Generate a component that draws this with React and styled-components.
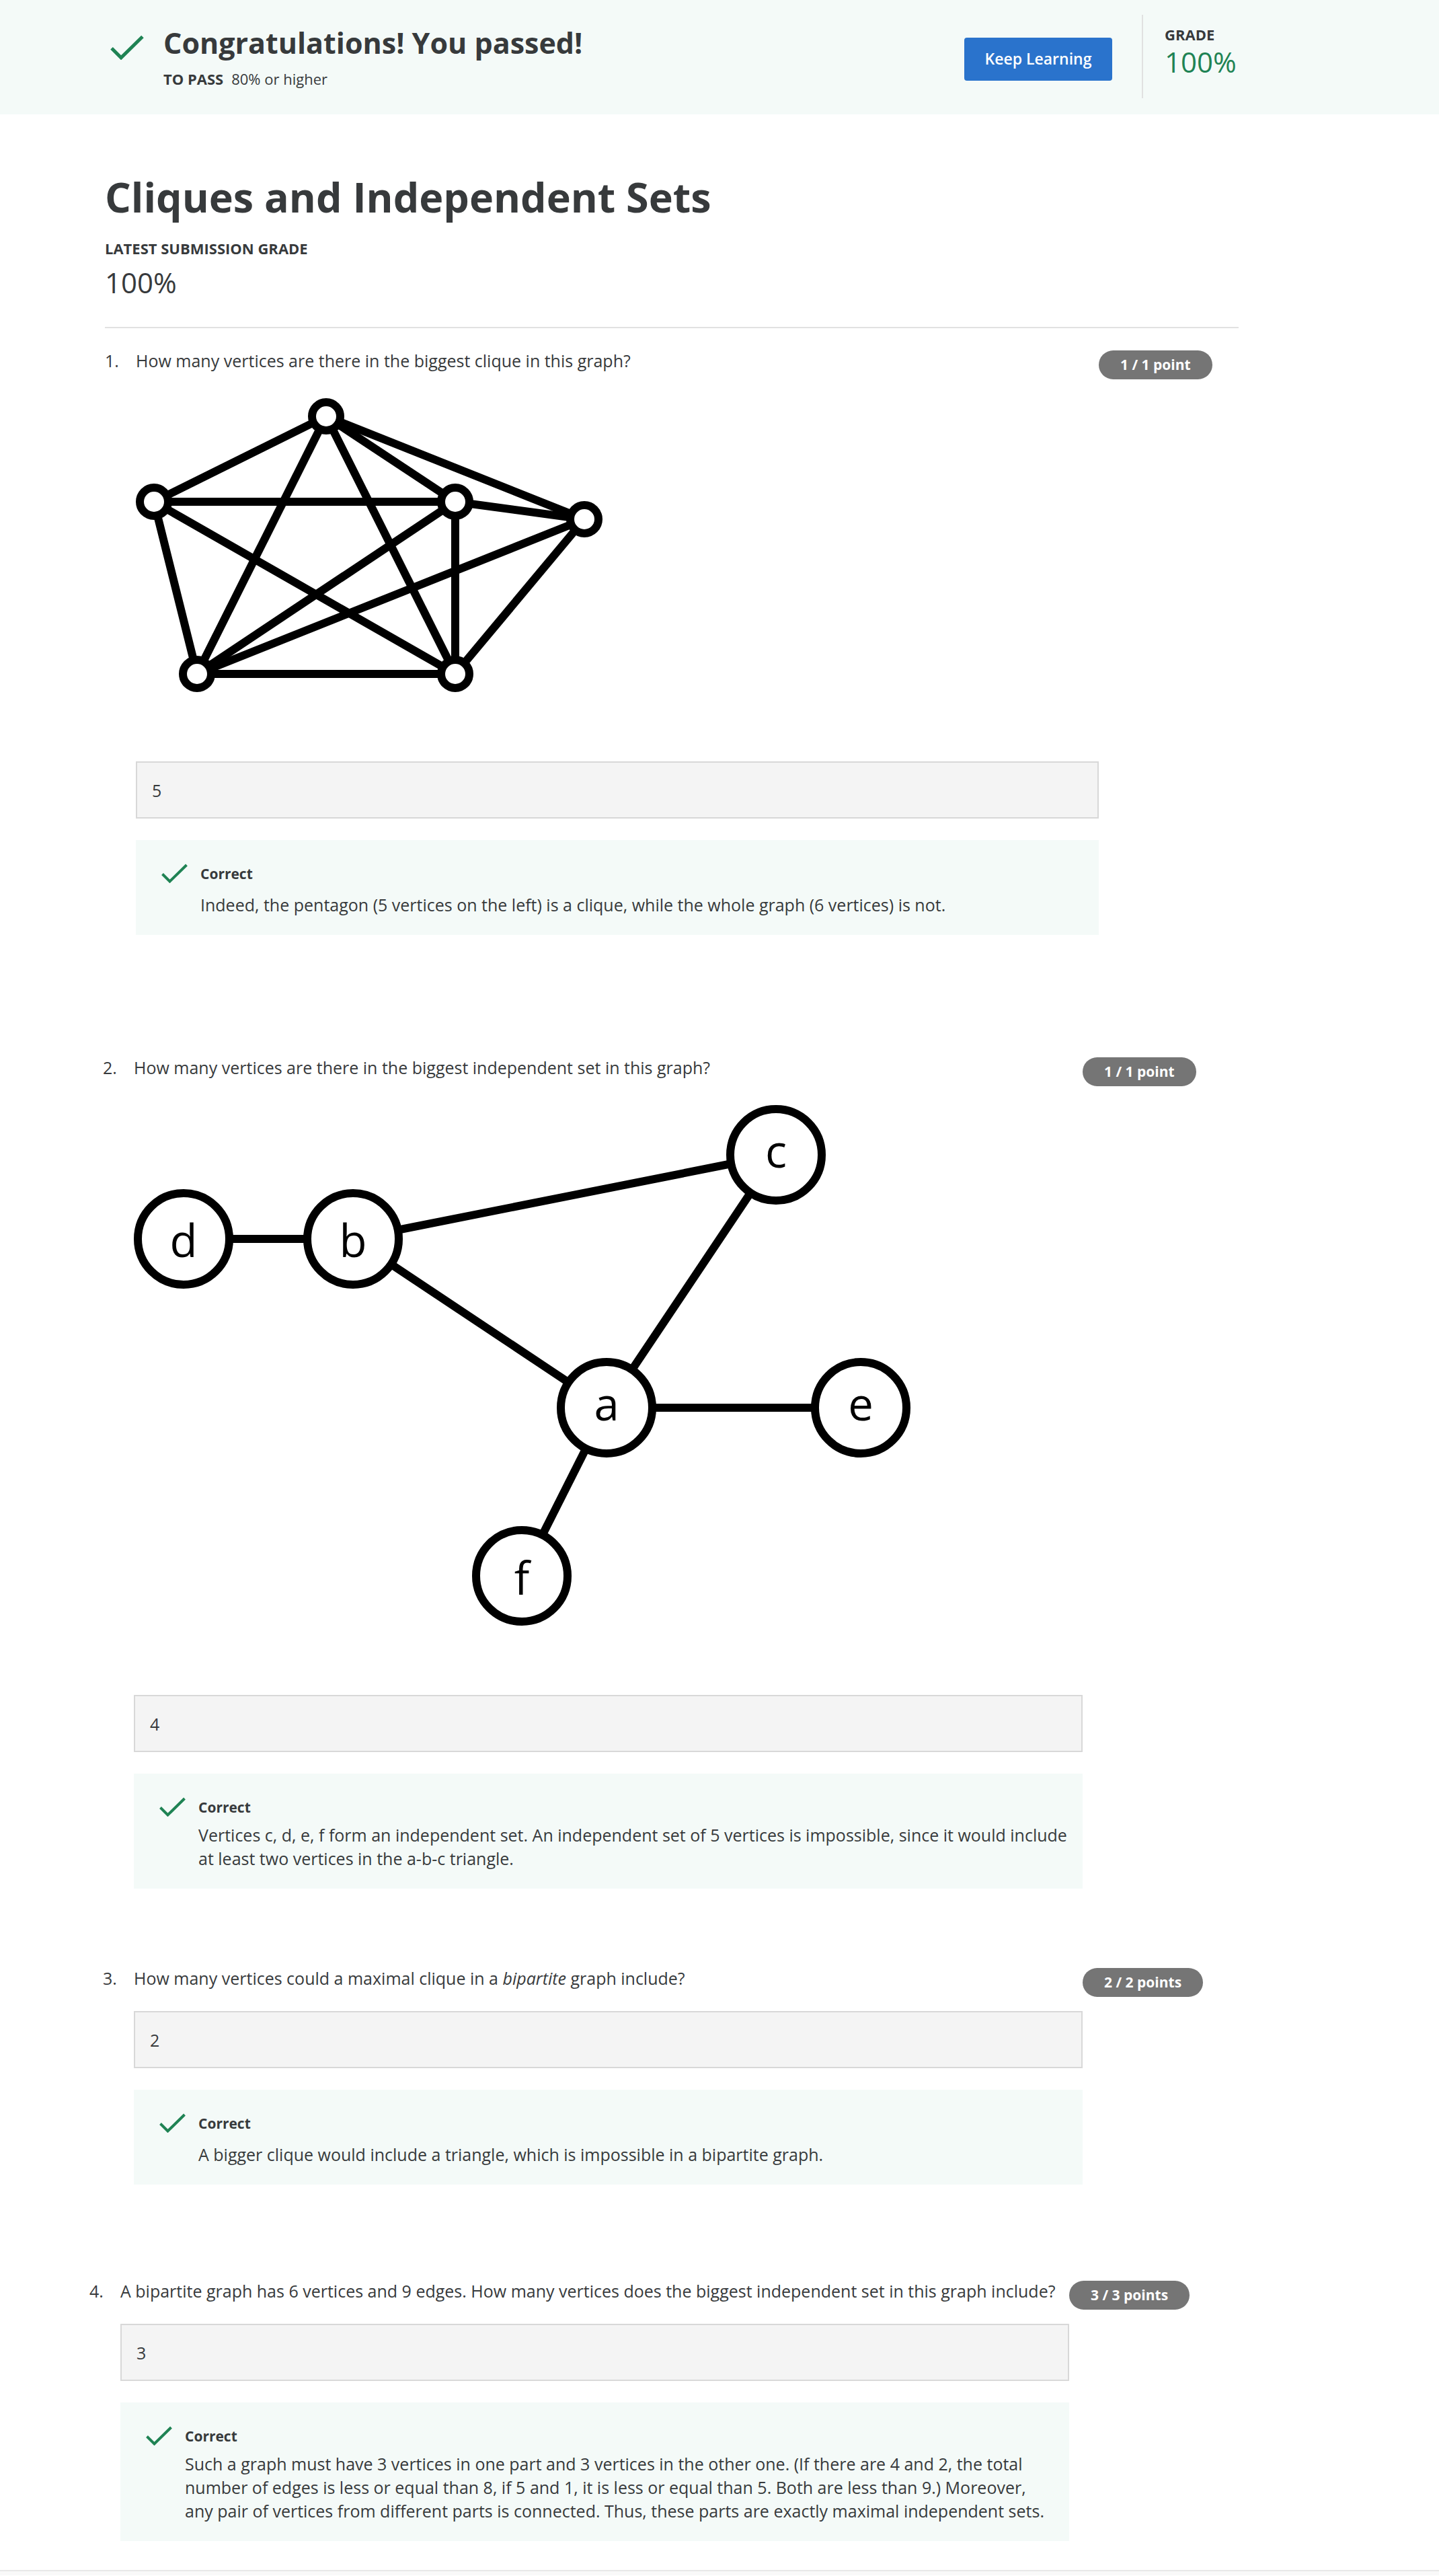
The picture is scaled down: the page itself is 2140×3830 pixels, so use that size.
import React from "react";
import styled, { createGlobalStyle } from "styled-components";

const GlobalStyle = createGlobalStyle`
  *, *::before, *::after { box-sizing: border-box; }
  body {
    margin: 0;
    background: #fff;
    color: #373a3c;
    font-family: "Open Sans", "Noto Sans", sans-serif;
    font-size: 25px;
    line-height: 35px;
  }
  h1, h2, h3, p, figure { margin: 0; }
`;

const Banner = styled.header`
  display: flex;
  align-items: stretch;
  padding: 22px 298px 24px 156px;
  background: #f4faf8;
`;

const BannerIcon = styled.div`
  padding: 30px 0 0 8px;
  width: 87px;
`;

const BannerText = styled.div`
  flex: 1;
  padding-top: 13px;
`;

const BannerTitle = styled.h2`
  margin-bottom: 10px;
  font-size: 43px;
  line-height: 58px;
  font-weight: 700;
`;

const Requirement = styled.p`
  display: flex;
  gap: 12px;
  font-size: 22px;
  line-height: 28px;
`;

const Strong = styled.span`
  font-weight: 700;
`;

const KeepLearning = styled.button`
  align-self: center;
  min-width: 220px;
  height: 64px;
  margin: 8px 44px 0 0;
  padding: 0 0 2px;
  border: 0;
  border-radius: 4px;
  background: #2a73cc;
  color: #fff;
  font: 600 23px/32px "Open Sans", "Noto Sans", sans-serif;
`;

const Grade = styled.div`
  min-width: 144px;
  min-height: 124px;
  padding: 15px 0 0 32px;
  border-left: 2px solid #e1e1e1;
`;

const Caption = styled.div`
  font-size: 22px;
  line-height: 28px;
  font-weight: 700;
`;

const Score = styled.div`
  font-size: 42px;
  line-height: 54px;
  font-weight: 400;
  color: ${(p) => (p.$passed ? "#1f8354" : "inherit")};
`;

const Intro = styled.section`
  margin: 0 298px 0 156px;
  padding: 83px 0 39px;
  border-bottom: 2px solid #e1e1e1;
`;

const PageTitle = styled.h1`
  margin-bottom: 22px;
  font-size: 61px;
  line-height: 80px;
  font-weight: 700;
`;

const Submission = styled.div`
  display: grid;
  gap: 10px;
`;

const Questions = styled.main`
  padding-top: 31px;
`;

const Question = styled.section`
  display: grid;
  grid-template-columns: 46px minmax(0, 1fr) 208px;
  align-items: start;
  padding: 0 ${(p) => p.$right}px ${(p) => p.$after}px ${(p) => p.$left}px;
`;

const Prompt = styled.label`
  display: block;
`;

const Figure = styled.figure`
  margin: 38px 0 103px;

  svg {
    display: block;
    max-width: 100%;
  }
`;

const Answer = styled.input`
  display: block;
  width: 100%;
  height: 85px;
  margin: ${(p) => (p.$spaced ? 31 : 0)}px 0 32px;
  padding: 0 22px;
  border: 2px solid #d8d8d8;
  border-radius: 0;
  background: #f4f4f4;
  color: inherit;
  font: inherit;
`;

const Feedback = styled.div`
  display: grid;
  grid-template-columns: 39px minmax(0, 1fr);
  column-gap: 19px;
  align-items: start;
  padding: 35px 20px 27px 38px;
  background: #f4faf8;
`;

const FeedbackTitle = styled.h3`
  margin-bottom: ${(p) => (p.$loose ? 14 : 9)}px;
  font-size: 21px;
  line-height: 30px;
  font-weight: 700;
`;

const Points = styled.span`
  justify-self: start;
  margin-top: 2px;
  padding: 0 32px;
  border-radius: 22px;
  background: #757575;
  color: #fff;
  font-size: 21px;
  line-height: 43px;
  font-weight: 700;
  white-space: nowrap;
`;

const PageFooter = styled.footer`
  height: 8px;
  border-top: 2px solid #e8e8e8;
  background: #f9f9f9;
`;

function Check({ width = 39 }) {
  return (
    <svg width={width} height={Math.round((width * 29) / 39)} viewBox="0 0 39 29" fill="none" aria-hidden="true">
      <path d="M1.5 15.5 L12.5 26.5 L37.5 2" stroke="#1f8354" strokeWidth="4" />
    </svg>
  );
}

function Graph({ title, width, height, radius, ring, nodes, edges }) {
  return (
    <svg width={width} height={height} viewBox={`0 0 ${width} ${height}`} role="img" aria-label={title}>
      <g stroke="#000" strokeWidth="12">
        {edges.map(([from, to]) => (
          <line
            key={`${from}-${to}`}
            x1={nodes[from].x}
            y1={nodes[from].y}
            x2={nodes[to].x}
            y2={nodes[to].y}
          />
        ))}
      </g>
      {Object.entries(nodes).map(([id, node]) => (
        <g key={id}>
          <circle cx={node.x} cy={node.y} r={radius} fill="#fff" stroke="#000" strokeWidth={ring} />
          {node.label && (
            <text x={node.x} y={node.y + node.drop} textAnchor="middle" fontSize="67" fill="#000">
              {node.label}
            </text>
          )}
        </g>
      ))}
    </svg>
  );
}

const cliqueGraph = {
  title: "Graph with six vertices",
  width: 694,
  height: 437,
  radius: 21,
  ring: 12,
  nodes: {
    top: { x: 283, y: 27 },
    left: { x: 27, y: 154 },
    middle: { x: 475, y: 154 },
    right: { x: 667, y: 180 },
    bottomLeft: { x: 91, y: 410 },
    bottomRight: { x: 475, y: 410 },
  },
  edges: [
    ["top", "left"],
    ["top", "bottomLeft"],
    ["top", "bottomRight"],
    ["top", "middle"],
    ["top", "right"],
    ["left", "middle"],
    ["left", "bottomLeft"],
    ["left", "bottomRight"],
    ["middle", "right"],
    ["middle", "bottomRight"],
    ["middle", "bottomLeft"],
    ["right", "bottomLeft"],
    ["right", "bottomRight"],
    ["bottomLeft", "bottomRight"],
  ],
};

const independentGraph = {
  title: "Graph with vertices a to f",
  width: 1155,
  height: 774,
  radius: 68,
  ring: 12,
  nodes: {
    a: { x: 703, y: 450, label: "a", drop: 19 },
    b: { x: 326, y: 199, label: "b", drop: 27 },
    c: { x: 955, y: 74, label: "c", drop: 19 },
    d: { x: 74, y: 199, label: "d", drop: 27 },
    e: { x: 1081, y: 450, label: "e", drop: 19 },
    f: { x: 577, y: 700, label: "f", drop: 28 },
  },
  edges: [
    ["d", "b"],
    ["b", "c"],
    ["b", "a"],
    ["c", "a"],
    ["a", "e"],
    ["a", "f"],
  ],
};

const questions = [
  {
    prompt: "How many vertices are there in the biggest clique in this graph?",
    graph: cliqueGraph,
    answer: "5",
    points: "1 / 1 point",
    loose: true,
    feedback: "Indeed, the pentagon (5 vertices on the left) is a clique, while the whole graph (6 vertices) is not.",
    left: 156,
    right: 298,
    after: 180,
  },
  {
    prompt: "How many vertices are there in the biggest independent set in this graph?",
    graph: independentGraph,
    answer: "4",
    points: "1 / 1 point",
    feedback:
      "Vertices c, d, e, f form an independent set. An independent set of 5 vertices is impossible, since it would include at least two vertices in the a-b-c triangle.",
    left: 153,
    right: 322,
    after: 116,
  },
  {
    prompt: (
      <>
        How many vertices could a maximal clique in a <em>bipartite</em> graph include?
      </>
    ),
    answer: "2",
    points: "2 / 2 points",
    loose: true,
    feedback: "A bigger clique would include a triangle, which is impossible in a bipartite graph.",
    left: 153,
    right: 322,
    after: 141,
  },
  {
    prompt:
      "A bipartite graph has 6 vertices and 9 edges. How many vertices does the biggest independent set in this graph include?",
    answer: "3",
    points: "3 / 3 points",
    feedback:
      "Such a graph must have 3 vertices in one part and 3 vertices in the other one. (If there are 4 and 2, the total number of edges is less or equal than 8, if 5 and 1, it is less or equal than 5. Both are less than 9.) Moreover, any pair of vertices from different parts is connected. Thus, these parts are exactly maximal independent sets.",
    left: 133,
    right: 342,
    after: 43,
  },
];

export default function App() {
  return (
    <>
      <GlobalStyle />
      <Banner>
        <BannerIcon>
          <Check width={50} />
        </BannerIcon>
        <BannerText>
          <BannerTitle>Congratulations! You passed!</BannerTitle>
          <Requirement>
            <Strong>TO PASS</Strong>
            <span>80% or higher</span>
          </Requirement>
        </BannerText>
        <KeepLearning type="button">Keep Learning</KeepLearning>
        <Grade>
          <Caption>GRADE</Caption>
          <Score $passed>100%</Score>
        </Grade>
      </Banner>
      <Intro>
        <PageTitle>Cliques and Independent Sets</PageTitle>
        <Submission>
          <Caption>LATEST SUBMISSION GRADE</Caption>
          <Score>100%</Score>
        </Submission>
      </Intro>
      <Questions>
        {questions.map((q, i) => (
          <Question key={i} $left={q.left} $right={q.right} $after={q.after}>
            <span>{i + 1}.</span>
            <div>
              <Prompt htmlFor={`answer-${i + 1}`}>{q.prompt}</Prompt>
              {q.graph && (
                <Figure>
                  <Graph {...q.graph} />
                </Figure>
              )}
              <Answer id={`answer-${i + 1}`} type="text" readOnly value={q.answer} $spaced={!q.graph} />
              <Feedback>
                <Check />
                <div>
                  <FeedbackTitle $loose={q.loose}>Correct</FeedbackTitle>
                  <p>{q.feedback}</p>
                </div>
              </Feedback>
            </div>
            <Points>{q.points}</Points>
          </Question>
        ))}
      </Questions>
      <PageFooter />
    </>
  );
}
